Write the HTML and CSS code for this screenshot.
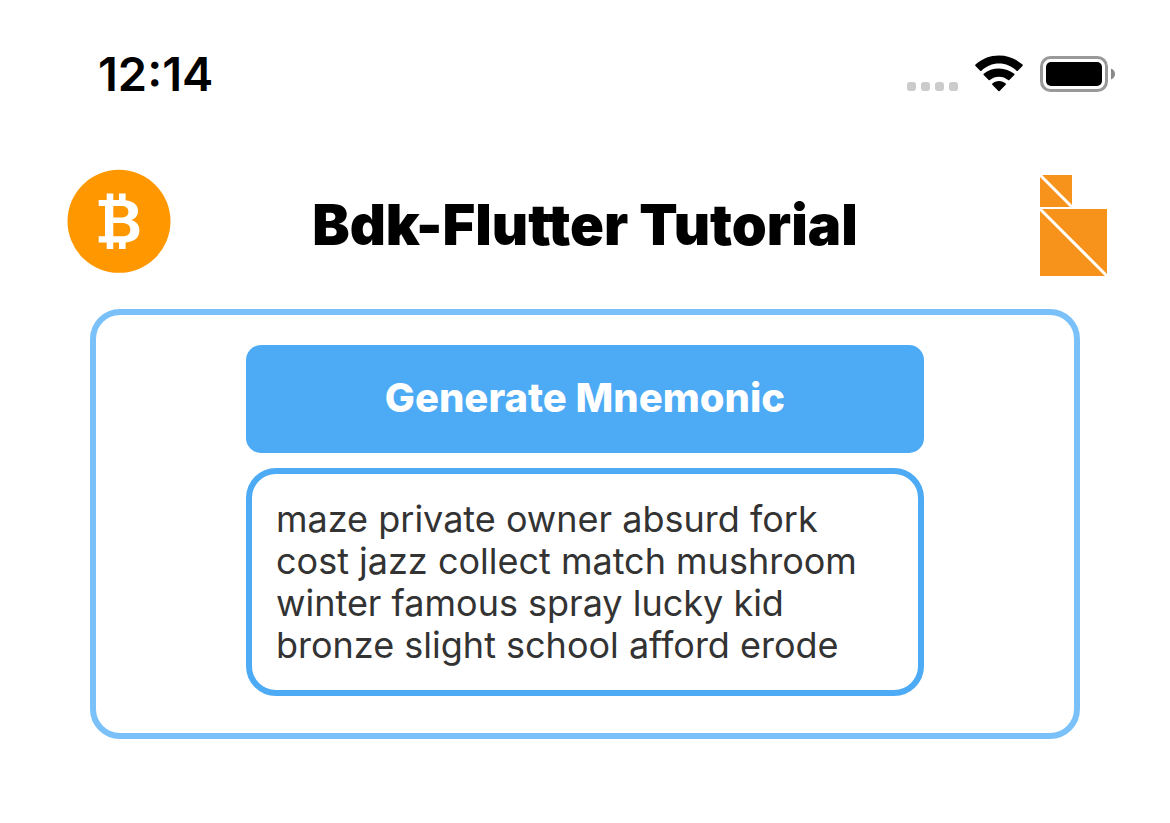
FILE: index.html
```html
<!DOCTYPE html>
<html lang="en">
<head>
<meta charset="utf-8">
<meta name="viewport" content="width=device-width, initial-scale=1">
<title>Bdk-Flutter Tutorial</title>
<link rel="stylesheet" href="styles.css">
</head>
<body>
<div class="status">
  <time class="clock">12:14</time>
  <div class="indicators">
    <svg class="signal" width="52" height="36" viewBox="0 0 52 36" aria-hidden="true">
      <g fill="#cbcbcb"><rect x="1" y="26" width="9" height="9" rx="3"/><rect x="15" y="26" width="9" height="9" rx="3"/><rect x="29" y="26" width="9" height="9" rx="3"/><rect x="43" y="26" width="9" height="9" rx="3"/></g>
    </svg>
    <svg class="wifi" width="50" height="36" viewBox="0 -1 50 36" aria-hidden="true">
      <path d="M25 6.500c6.700 0 12.900 2.700 17.500 7.200.400.400.900.400 1.300 0l4.700-4.700c.400-.400.400-1 0-1.400C42.100 1.700 33.800-1.500 25-1.500S7.900 1.700 1.500 7.600c-.400.400-.400 1 0 1.400l4.700 4.700c.400.400.900.400 1.300 0C12.100 9.200 18.300 6.500 25 6.500Z"/>
      <path d="M25 19.700c3.400 0 6.600 1.200 9.100 3.400.400.300.800.300 1.200 0l5-5c.400-.400.400-.900 0-1.300C36.200 13.700 30.800 11.500 25 11.500s-11.200 1.600-15.300 5.300c-.400.400-.400.900 0 1.300l5 5c.400.300.800.300 1.200 0 2.500-2.200 5.700-3.400 9.100-3.400Z"/>
      <path d="M31.700 27.700c.300-.300.300-.800 0-1.100-1.800-1.600-4.200-2.500-6.700-2.500s-4.900.900-6.700 2.500c-.300.300-.300.800 0 1.100l6.100 6.200c.400.400.800.400 1.200 0Z"/>
    </svg>
    <svg class="battery" width="76" height="36" viewBox="0 0 76 36" aria-hidden="true">
      <rect x="1.500" y="1.500" width="65" height="33" rx="9" fill="none" stroke="#999" stroke-width="3"/>
      <rect x="6" y="6" width="56" height="24" rx="5"/>
      <path d="M71 12.500c5.300 2 5.300 9 0 11Z" fill="#888"/>
    </svg>
  </div>
</div>
<header class="header">
  <svg class="bitcoin" width="104" height="104" viewBox="0 0 104 104" role="img" aria-label="Bitcoin">
    <circle cx="52" cy="52.300" r="51.500" fill="#ff9800"/>
    <path fill="#fff" fill-rule="evenodd" d="M39.700 24.500h6.600V31H52v-6.500h6.600v6.700C66.500 32 71 36 71 41.700c0 4.500-2.300 7.800-7 9.300 5.500 1.200 8.400 5.200 8.400 10.500 0 7-5 11.400-13.800 11.900V80H52v-6.600h-5.700V80h-6.600v-6.600h-8v-6.100H38V37.100h-6.300V31h8ZM46.300 37.100v11.500H54c4.900 0 7.400-1.900 7.400-5.800 0-3.800-2.500-5.700-7.400-5.700ZM46.300 54.100v13.200h8.200c6 0 8.800-2.200 8.800-6.600s-2.800-6.600-8.800-6.600Z"/>
  </svg>
  <h1 class="title">Bdk-Flutter Tutorial</h1>
  <svg class="bdk" width="67" height="101" viewBox="0 0 67 101" role="img" aria-label="BDK">
    <path fill="#f7931a" d="M0 0h32v32H0ZM0 34h67v67H0Z"/>
    <path fill="none" stroke="#fff" stroke-width="3" d="M0 0l32 32M0 34l67 67"/>
  </svg>
</header>
<main class="card">
  <button class="generate" type="button">Generate Mnemonic</button>
  <p class="mnemonic">maze private owner absurd fork cost jazz collect match mushroom winter famous spray lucky kid bronze slight school afford erode</p>
</main>
</body>
</html>
```
FILE: styles.css
```css
* { box-sizing: border-box; }

body {
  margin: 0;
  background: #fff;
  color: #000;
  font-family: Inter, "Liberation Sans", sans-serif;
}

.status {
  display: flex;
  justify-content: space-between;
  align-items: center;
  padding: 45px 54px 0 98px;
}

.clock {
  font-size: 47px;
  line-height: 58px;
  font-weight: 600;
}

.indicators {
  display: flex;
  gap: 16px;
}

.wifi { overflow: visible; }

.header {
  display: grid;
  grid-template-columns: 1fr auto 1fr;
  align-items: start;
  padding: 66px 63px 33px;
}

.bitcoin { margin-left: 4px; }

.bdk {
  justify-self: end;
  margin-top: 6px;
}

.title {
  margin: 24px 0 0;
  font-size: 56px;
  line-height: 64px;
  font-weight: 900;
}

.card {
  display: flex;
  flex-direction: column;
  gap: 15px;
  margin: 0 90px;
  padding: 30px 150px 37px;
  border: 6px solid #7ac0f9;
  border-radius: 30px;
}

.generate {
  padding: 29px 30px 31px;
  border: 0;
  border-radius: 15px;
  background: #4daaf5;
  color: #fff;
  font: inherit;
  font-size: 40px;
  line-height: 48px;
  font-weight: 800;
}

.mnemonic {
  margin: 0;
  padding: 24px;
  border: 6px solid #4daaf5;
  border-radius: 30px;
  color: #333;
  font-size: 36px;
  line-height: 42px;
}
```
